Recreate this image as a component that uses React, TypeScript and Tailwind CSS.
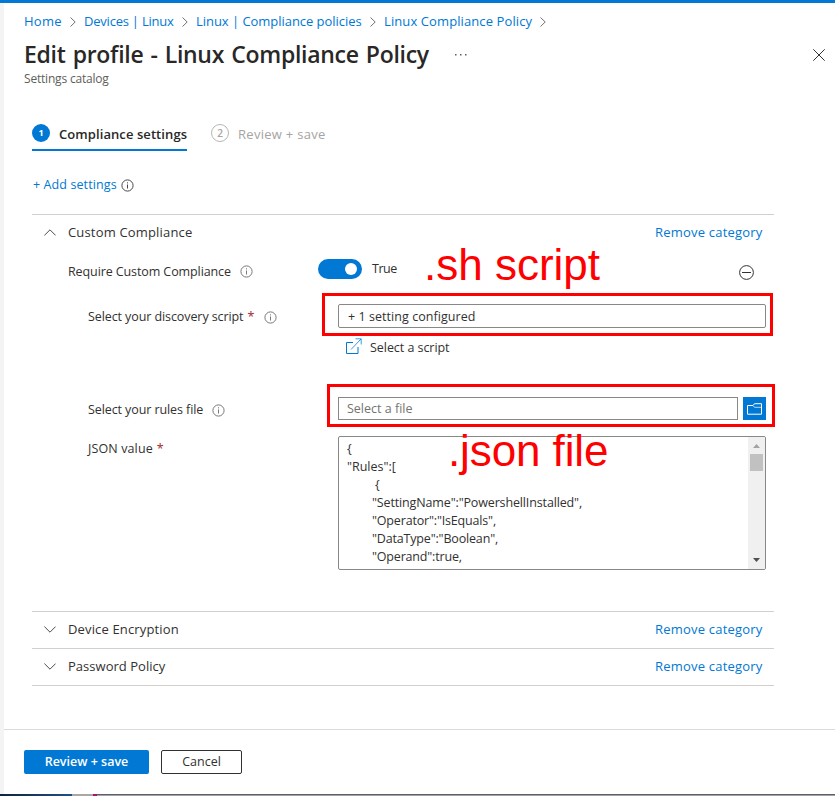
import type { ReactNode } from "react";

function Crumb({ children, className }: { children: ReactNode; className: string }) {
  return (
    <>
      <a className={`shrink-0 whitespace-nowrap text-[#0078d4] ${className}`}>{children}</a>
      <svg className="ml-2 mr-2 mt-0.5 shrink-0" width="6" height="10" viewBox="0 0 6 10" fill="none" stroke="#767472">
        <path d="M0.5 0.5 5.2 5 0.5 9.5" />
      </svg>
    </>
  );
}

function InfoIcon({ dark = false }: { dark?: boolean }) {
  const color = dark ? "#4a4846" : "#7a7876";
  return (
    <svg className="shrink-0" width="13" height="13" viewBox="0 0 13 13" fill="none" stroke={color}>
      <circle cx="6.5" cy="6.5" r="5.6" strokeWidth="1" />
      <path d="M6.5 5.5V9.5M6.5 3.3V4.4" />
    </svg>
  );
}

function Chevron({ up = false }: { up?: boolean }) {
  return (
    <svg className="mt-px shrink-0" width="12" height="7" viewBox="0 0 12 7" fill="none" stroke="#4b4a49">
      <path d={up ? "M0.4 6.4 6 0.8 11.6 6.4" : "M0.4 0.6 6 6.2 11.6 0.6"} />
    </svg>
  );
}

function CategoryHeader({ title, className, up }: { title: string; className: string; up?: boolean }) {
  return (
    <div className="flex items-center pl-3 pr-[11.5px]">
      <Chevron up={up} />
      <span className={`ml-3 text-[13px] ${className}`}>{title}</span>
      <a className="ml-auto text-[13px] tracking-[0.2px] text-[#0078d4]">Remove category</a>
    </div>
  );
}

function Required() {
  return <span className="ml-1 text-[#a4262c]">*</span>;
}

const jsonLines = [
  { text: "{", className: "" },
  { text: '"Rules":[', className: "" },
  { text: "{", className: "pl-7" },
  { text: '"SettingName":"PowershellInstalled",', className: "pl-[25px] tracking-[-0.14px]" },
  { text: '"Operator":"IsEquals",', className: "pl-[25px] tracking-[-0.17px]" },
  { text: '"DataType":"Boolean",', className: "pl-[25px] tracking-[-0.17px]" },
  { text: '"Operand":true,', className: "pl-[25px] tracking-[-0.18px]" },
];

export default function App() {
  return (
    <div className="relative flex h-[796px] w-[835px] flex-col overflow-hidden bg-white font-['Open_Sans','Noto_Sans',sans-serif] text-[12.5px] leading-[18px] text-[#323130]">
      <div className="h-[3px] shrink-0 bg-[#0078d4]" />
      <div className="flex h-[791px] shrink-0">
        <div className="w-1 shrink-0 bg-[#f4f4f4]" />
        <div className="flex min-w-0 flex-1 flex-col">
          <nav className="flex h-9 shrink-0 items-center pl-5 text-[13px]">
            <Crumb className="w-[38px] tracking-[0.25px]">Home</Crumb>
            <Crumb className="w-[90px] tracking-[-0.22px]">Devices | Linux</Crumb>
            <Crumb className="w-[166px] tracking-[-0.04px]">Linux | Compliance policies</Crumb>
            <Crumb className="w-[148px] tracking-[0.1px]">Linux Compliance Policy</Crumb>
          </nav>

          <div className="flex h-[30px] shrink-0 items-center pl-5 pr-[10px]">
            <h1 className="w-[405px] shrink-0 whitespace-nowrap text-[23px] font-semibold leading-[30px] tracking-[-0.28px] [word-spacing:1.4px] text-[#292827]">
              Edit profile - Linux Compliance Policy
            </h1>
            <svg className="ml-[26px] mt-px" width="12" height="2" fill="#605e5c">
              <rect x="0" width="1.5" height="1.5" />
              <rect x="5" width="1.5" height="1.5" />
              <rect x="10" width="1.5" height="1.5" />
            </svg>
            <svg className="ml-auto mt-0.5" width="12" height="12" viewBox="0 0 12 12" stroke="#323130">
              <path d="M0.3 0.3 11.7 11.7M11.7 0.3 0.3 11.7" />
            </svg>
          </div>
          <div className="h-[18px] shrink-0 pl-5 pt-px text-[12px] tracking-[-0.19px] text-[#605e5c]">Settings catalog</div>

          <div className="mt-8 flex h-8 shrink-0 pl-7">
            <div className="flex w-[155px] items-center border-b-2 border-[#0078d4]">
              <span className="mb-[3px] flex size-[18px] shrink-0 items-center justify-center rounded-full bg-[#0078d4] text-[9px] font-bold text-white">1</span>
              <span className="ml-[9px] whitespace-nowrap text-[13px] font-semibold tracking-[0.08px] text-[#292827]">Compliance settings</span>
            </div>
            <div className="ml-6 flex items-center pb-0.5 text-[#a6a4a2]">
              <span className="mb-[3px] flex size-[18px] items-center justify-center rounded-full border border-[#b8b6b4] text-[10px] font-semibold">2</span>
              <span className="ml-[9px] text-[13px] tracking-[0.28px]">Review + save</span>
            </div>
          </div>

          <div className="mt-6 flex h-5 shrink-0 items-center pl-[29px]">
            <a className="w-[87.5px] tracking-[0.1px] text-[#0078d4]">+ Add settings</a>
            <InfoIcon dark />
          </div>

          <div className="ml-7 mt-[19px] w-[742px] shrink-0">
            <section className="border-t border-[#d2d0ce]">
              <div className="flex h-[34px] flex-col justify-center">
                <CategoryHeader title="Custom Compliance" className="tracking-[0.17px]" up />
              </div>

              <div className="flex h-[45px] items-center pl-9">
                <div className="flex w-[250px] items-center">
                  <span className="w-[171.5px] tracking-[-0.1px]">Require Custom Compliance</span>
                  <InfoIcon />
                </div>
                <div className="mb-[5px] flex items-center">
                  <span className="flex h-5 w-11 items-center justify-end rounded-full bg-[#0078d4] pr-[5px]">
                    <span className="size-3 rounded-full bg-white" />
                  </span>
                  <span className="ml-[10px] tracking-[-0.5px]">True</span>
                </div>
                <svg className="ml-auto mr-5 mt-px" width="15" height="15" viewBox="0 0 15 15" fill="none" stroke="#323130">
                  <circle cx="7.5" cy="7.5" r="6.9" />
                  <path d="M3 7.5H12" />
                </svg>
              </div>

              <div className="flex h-11 items-center pl-14">
                <div className="flex w-[250px] items-center pt-0.5">
                  <span className="w-[175.5px] tracking-[-0.09px]">
                    Select your discovery script<Required />
                  </span>
                  <InfoIcon />
                </div>
                <div className="flex h-6 w-[428px] items-center rounded-[2px] border border-[#8a8886] pl-[9px] pt-0.5 tracking-[0.05px]">
                  + 1 setting configured
                </div>
              </div>

              <div className="flex h-[18px] items-center pl-[313px]">
                <svg className="mb-px shrink-0" width="17" height="17" viewBox="0 0 17 17" fill="none" stroke="#0078d4">
                  <path d="M8 4.5H1.5V15.5H13V9" />
                  <path d="M6 11.5 16 1M10.5 0.8H16.2V6.5" strokeOpacity="0.75" />
                </svg>
                <span className="ml-2 pt-0.5 tracking-[-0.05px]">Select a script</span>
              </div>

              <div className="mt-[41px] flex h-[23px] items-center pl-14">
                <div className="flex w-[250px] items-center pt-[3px]">
                  <span className="w-[123.5px] tracking-[-0.09px]">Select your rules file</span>
                  <InfoIcon />
                </div>
                <div className="flex h-[23px] w-[400px] items-center border border-[#8a8886] pl-2 text-[#757371]">Select a file</div>
                <div className="ml-[5px] flex size-[23px] items-center justify-center bg-[#0078d4]">
                  <svg width="15" height="12" viewBox="0 0 15 12" fill="none" stroke="white">
                    <path d="M0.5 2.5H6L7.5 0.7H14.5V11.2H0.5Z" />
                    <path d="M6 2.5 7.5 4.3H14.5" strokeOpacity="0.7" />
                  </svg>
                </div>
              </div>

              <div className="mt-4 flex h-[134px] pl-14">
                <div className="w-[250px] pt-1 tracking-[0.12px]">
                  JSON value<Required />
                </div>
                <div className="flex w-[428px] overflow-hidden rounded-[2px] border border-[#8a8886]">
                  <div className="flex-1 pl-2 pt-[3px]">
                    {jsonLines.map((line, i) => (
                      <div key={i} className={`h-[18px] whitespace-nowrap ${line.className}`}>{line.text}</div>
                    ))}
                  </div>
                  <div className="flex w-[17px] flex-col items-center bg-[#f0f0f0]">
                    <svg className="mt-[7px]" width="7" height="4" fill="#a3a3a3">
                      <path d="M0 4 3.5 0 7 4Z" />
                    </svg>
                    <div className="mt-[6px] h-[17px] w-[13px] bg-[#c1c1c1]" />
                    <svg className="mb-[7px] mt-auto" width="7" height="4" fill="#505050">
                      <path d="M0 0 3.5 4 7 0Z" />
                    </svg>
                  </div>
                </div>
              </div>
            </section>

            <section className="mt-[41px] flex h-[37px] flex-col justify-center border-t border-[#d2d0ce] pb-0.5">
              <CategoryHeader title="Device Encryption" className="tracking-[0.15px]" />
            </section>
            <section className="flex h-[38px] flex-col justify-center border-y border-[#d2d0ce] pb-0.5">
              <CategoryHeader title="Password Policy" className="tracking-[0.03px]" />
            </section>
          </div>

          <footer className="mt-[43px] flex gap-3 border-t border-[#dddbd9] pl-5 pt-5">
            <button className="h-6 w-[125px] rounded-[2px] bg-[#0078d4] pb-px font-semibold text-white">Review + save</button>
            <button className="h-6 w-[81px] rounded-[2px] border border-[#323130] pb-px font-medium">Cancel</button>
          </footer>
        </div>
      </div>

      <div className="flex h-0.5 shrink-0">
        <div className="w-[72px] bg-linear-to-r from-[#10243c] to-[#1c5288]" />
        <div className="w-[21px] bg-[#aaa8a6]" />
        <div className="w-1 bg-[#b0106c]" />
        <div className="flex-1 border-t border-[#5f6066] bg-[#9fa2ab]" />
      </div>

      <div className="absolute left-[322px] top-[293px] h-[43px] w-[451px] border-3 border-[#ff0000]" />
      <div className="absolute left-[327px] top-[384px] h-[43px] w-[448px] border-3 border-[#ff0000]" />
      <div className="absolute left-[424px] top-[243px] whitespace-nowrap font-['Liberation_Sans',Arial,sans-serif] text-[44px] leading-[44px] text-[#ff0000]">.sh script</div>
      <div className="absolute left-[448px] top-[429px] whitespace-nowrap font-['Liberation_Sans',Arial,sans-serif] text-[44px] leading-[44px] tracking-[-0.1px] text-[#ff0000]">.json file</div>
    </div>
  );
}
